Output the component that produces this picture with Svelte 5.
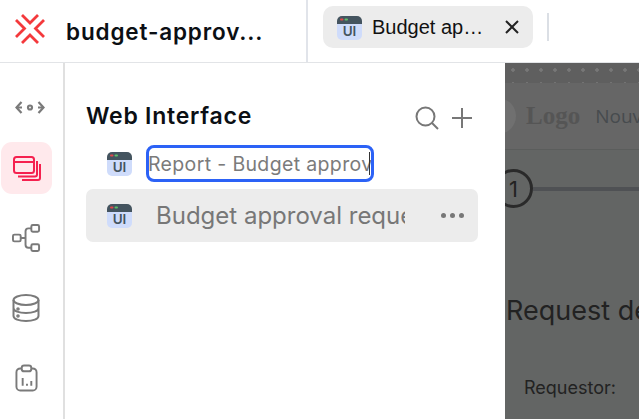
{#snippet ui(cls)}
  <svg class={cls} width="25" height="24" viewBox="0 0 25 24" aria-hidden="true">
    <path d="M0 8H25V19a5 5 0 0 1-5 5H5a5 5 0 0 1-5-5Z" fill="#cfdcfb"/>
    <path d="M5 0H20a5 5 0 0 1 5 5V8H0V5a5 5 0 0 1 5-5Z" fill="#44545f"/>
    <rect x="3" y="2.500" width="3.500" height="2" rx="1" fill="#e0484c"/>
    <rect x="7.500" y="2.500" width="3.500" height="2" rx="1" fill="#5fbf6a"/>
    <text x="12.500" y="20" text-anchor="middle" class="uitext">UI</text>
  </svg>
{/snippet}

<div class="app">
  <header class="top">
    <div class="brand">
      <svg class="logo" width="30" height="30" viewBox="0 0 30 30" fill="none" stroke="#f4393c" stroke-width="2.800" aria-hidden="true">
        <path d="M1 6 9.500 14.500 1 23M29 6 20.500 14.500 29 23"/>
        <path d="M7 1 15 9 23 1M7 29 15 21 23 29"/>
      </svg>
      <span class="title">budget-approv...</span>
    </div>
    <div class="tabs">
      <div class="tab">
        {@render ui('tabicon')}
        <span class="tabname">Budget ap…</span>
        <svg width="16" height="16" viewBox="0 0 16 16" stroke="#222" stroke-width="2" aria-hidden="true"><path d="M2 2 14 14M14 2 2 14"/></svg>
      </div>
      <div class="sep"></div>
    </div>
  </header>
  <div class="body">
    <nav class="rail">
      <svg class="r1" width="30" height="13" viewBox="0 0 30 13" fill="none" stroke="#7a7a7a" stroke-width="2.200" aria-hidden="true">
        <path d="M6.500 1 1.500 6.500 6.500 12M23.500 1 28.500 6.500 23.500 12"/><path d="M2 6.500H7M23 6.500H28"/><circle cx="15" cy="6.500" r="2"/>
      </svg>
      <div class="active">
        <svg width="28" height="25" viewBox="0 0 28 25" fill="none" stroke="#f5214f" stroke-width="2" aria-hidden="true">
          <rect x="1" y="1" width="20" height="16" rx="2.500"/><path d="M1 6H21"/>
          <path d="M24 5V18.500a2 2 0 0 1-2 2H5"/><path d="M27 8V22a2 2 0 0 1-2 2H9"/>
        </svg>
      </div>
      <svg class="n3" width="29" height="29" viewBox="0 0 30 30" fill="none" stroke="#7a7a7a" stroke-width="2" aria-hidden="true">
        <rect x="1" y="11" width="8" height="7" rx="1.500"/><rect x="20" y="1" width="8" height="7" rx="1.500"/><rect x="20" y="21" width="8" height="7" rx="1.500"/>
        <path d="M9 14.500H14M20 4.500H17a3 3 0 0 0-3 3V21.500a3 3 0 0 0 3 3H20"/>
      </svg>
      <svg class="n4" width="28" height="28" viewBox="0 0 28 28" fill="none" stroke="#7a7a7a" stroke-width="2" aria-hidden="true">
        <ellipse cx="14" cy="6" rx="12.500" ry="5"/>
        <path d="M1.500 6V22C1.500 25 7 27 14 27S26.500 25 26.500 22V6M1.500 14C1.500 17 7 19 14 19S26.500 17 26.500 14"/>
        <circle cx="6" cy="15" r=".8"/><circle cx="6" cy="22" r=".8"/>
      </svg>
      <svg class="n5" width="23" height="28" viewBox="0 0 24 28" fill="none" stroke="#7a7a7a" stroke-width="2" aria-hidden="true">
        <rect x="1.500" y="4" width="21" height="23" rx="4"/><rect x="7" y="1" width="10" height="6" rx="2.500" fill="#fff"/>
        <path d="M8 14V22M12.500 20V22M17 17V22"/>
      </svg>
    </nav>
    <aside class="panel">
      <div class="phead">
        <h2>Web Interface</h2>
        <div class="acts">
          <svg width="26" height="26" viewBox="0 0 26 26" fill="none" stroke="#777" stroke-width="2" aria-hidden="true"><circle cx="11.500" cy="11.500" r="9"/><path d="M18 18 24 24"/></svg>
          <svg width="24" height="24" viewBox="0 0 24 24" fill="none" stroke="#777" stroke-width="2" aria-hidden="true"><path d="M12 2V22M2 12H22"/></svg>
        </div>
      </div>
      <div class="row editing">
        {@render ui('rowicon')}
        <div class="input"><span>Report - Budget approval</span><i></i></div>
      </div>
      <div class="row selected">
        {@render ui('rowicon')}
        <span class="rname">Budget approval request</span>
        <span class="dots"><b></b><b></b><b></b></span>
      </div>
    </aside>
    <main class="preview">
      <div class="pattern"></div>
      <div class="pagehead">
        <div class="circle"></div>
        <span class="plogo">Logo</span>
        <span class="nouv">Nouveau</span>
      </div>
      <div class="steps"><span class="step">1</span><span class="line"></span></div>
      <h1>Request details</h1>
      <div class="lbl">Requestor:</div>
    </main>
  </div>
</div>

<style>
  :global(body) { margin: 0; background: #fff; }
  .app { width: 639px; height: 419px; overflow: hidden; display: flex; flex-direction: column; font-family: "Inter", "Liberation Sans", sans-serif; }
  .top { height: 63px; box-sizing: border-box; flex: none; display: flex; border-bottom: 1px solid #e2e4e7; }
  .brand { width: 306px; flex: none; border-right: 2px solid #e1e4ea; display: flex; align-items: center; }
  .logo { margin: 0 0 5px 15px; flex: none; }
  .title { margin-left: 21px; font-size: 22.500px; font-weight: 600; letter-spacing: .85px; color: #0b0f14; white-space: nowrap; }
  .tabs { display: flex; align-items: center; padding-left: 15px; }
  .tab { width: 210px; height: 42px; box-sizing: border-box; margin-top: -8px; background: #ececec; border-radius: 10px; display: flex; align-items: center; padding: 0 13px 0 14px; }
  .tabicon { flex: none; margin-top: 1px; }
  .tabname { flex: 1; margin-left: 10px; font: 20px "Liberation Sans", sans-serif; color: #111; white-space: nowrap; }
  .sep { width: 2px; height: 28px; margin: -8px 0 0 14px; background: #dbdfe5; }
  .body { flex: 1; display: flex; min-height: 0; }
  .rail { width: 65px; box-sizing: border-box; flex: none; border-right: 2px solid #e0e0e0; display: flex; flex-direction: column; align-items: flex-start; }
  .rail > svg { display: block; flex: none; }
  .r1 { margin: 38px 0 0 15px; }
  .active { width: 51px; height: 52px; margin: 28px 0 0 1px; border-radius: 11px; background: #ffe9ec; display: flex; align-items: center; justify-content: center; flex: none; }
  .n3 { margin: 30px 0 0 12px; }
  .n4 { margin: 41px 0 0 12px; }
  .n5 { margin: 42px 0 0 15px; }
  .panel { width: 440px; flex: none; padding: 0 27px 0 21px; box-sizing: border-box; }
  .phead { height: 82px; display: flex; align-items: center; justify-content: space-between; padding-top: 27px; box-sizing: border-box; }
  h2 { margin: -4px 0 0; font-size: 23px; font-weight: 600; letter-spacing: .75px; color: #0b0f14; line-height: 30px; }
  .acts { display: flex; gap: 10px; align-items: center; margin: 1px 4px 0 0; }
  .row { display: flex; align-items: center; }
  .rowicon { margin-left: 21px; flex: none; }
  .editing { height: 37px; }
  .input { width: 228px; height: 37px; box-sizing: border-box; margin-left: 14px; border: 3px solid #2c62f6; border-radius: 8px; font-size: 19.500px; letter-spacing: .35px; color: #7b7b7b; overflow: hidden; display: flex; align-items: center; position: relative; white-space: nowrap; }
  .input span { margin-left: -1px; }
  .input i { position: absolute; right: 1px; top: 4px; bottom: 4px; width: 1px; background: #333; }
  .selected { height: 53px; margin-top: 7px; border-radius: 7px; background: #ececec; }
  .rname { width: 249px; margin-left: 24px; font-size: 24px; color: #777; overflow: hidden; white-space: nowrap; flex: none; }
  .dots { display: flex; gap: 4px; margin-left: 36px; }
  .dots b { width: 5px; height: 5px; border-radius: 50%; background: #777; }
  .preview { flex: 1; background: #636564; position: relative; overflow: hidden; color: #222; }
  .pattern { height: 20px; background: #5f5f5f radial-gradient(circle, #777 1.500px, transparent 2px) 1px 0 / 14px 14px; }
  .pagehead { height: 67px; display: flex; align-items: center; border-bottom: 1px solid #5b5d5c; background: #666; box-sizing: border-box; white-space: nowrap; }
  .circle { width: 36px; height: 36px; border-radius: 50%; background: #707070; margin-left: -25px; flex: none; }
  .plogo { margin-left: 10px; font: bold 25px "Liberation Serif", serif; color: #555; }
  .nouv { margin-left: 15px; font: 19px "Open Sans", sans-serif; color: #474b4e; }
  .steps { display: flex; align-items: center; margin-top: 19px; }
  .step { width: 39px; height: 39px; box-sizing: border-box; border: 3px solid #2a2a2a; border-radius: 50%; margin-left: -11px; display: flex; align-items: center; justify-content: center; font-size: 22px; flex: none; }
  .line { flex: 1; height: 4px; background: #4f5154; }
  h1 { margin: 85px 0 0 1px; font-size: 27px; font-weight: 400; color: #222; white-space: nowrap; line-height: 36px; }
  .lbl { margin: 48px 0 0 19px; font-size: 18px; color: #222; white-space: nowrap; }
  .uitext { font: 600 13.500px "Inter", sans-serif; fill: #44545f; }
</style>
